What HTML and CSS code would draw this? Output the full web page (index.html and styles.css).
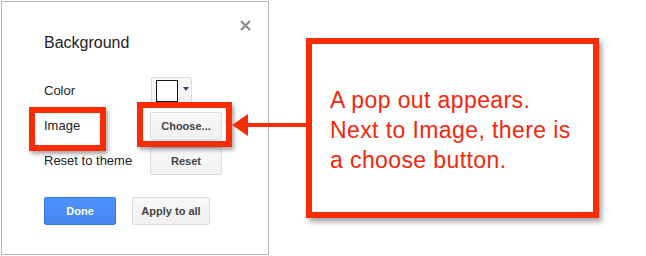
FILE: index.html
```html
<!DOCTYPE html>
<html lang="en">
<head>
    <meta charset="UTF-8">
    <title>Background dialog - annotated</title>
    <link rel="stylesheet" href="styles.css">
</head>
<body>
    <div class="stage">
        <div class="dialog">
            <svg class="close" width="11" height="11" viewBox="0 0 11 11">
                <path d="M1 1 L10 10 M10 1 L1 10" stroke="#8c8c8c" stroke-width="2.2" fill="none"/>
            </svg>
            <h2 class="title">Background</h2>
            <div class="rows">
                <span class="label">Color</span>
                <button class="btn color-btn">
                    <span class="swatch"></span>
                    <span class="caret"></span>
                </button>

                <span class="label">Image</span>
                <button class="btn">Choose...</button>

                <span class="label">Reset to theme</span>
                <button class="btn">Reset</button>
            </div>
            <div class="actions">
                <button class="btn btn-primary">Done</button>
                <button class="btn btn-wide">Apply to all</button>
            </div>
        </div>

        <!-- annotations drawn over the screenshot -->
        <div class="mark mark-image"></div>
        <div class="mark mark-choose"></div>
        <svg class="arrow" width="80" height="30" viewBox="0 0 80 30">
            <rect x="14" y="13" width="64" height="4" fill="#fa2c06"/>
            <polygon points="2,15 18,4 18,26" fill="#fa2c06"/>
        </svg>
        <div class="callout">
            A pop out appears.<br>
            Next to Image, there is<br>
            a choose button.
        </div>
    </div>
</body>
</html>
```

FILE: styles.css
```css
body {
    margin: 0;
    background: #fff;
    font-family: "Liberation Sans", Arial, sans-serif;
}
.stage {
    position: relative;
    width: 646px;
    height: 256px;
    overflow: hidden;
}
.dialog {
    position: relative;
    box-sizing: border-box;
    width: 268px;
    height: 254px;
    margin: 1px 0 0 1px;
    padding: 31px 0 0 42px;
    border: 1px solid #b4b4b4;
    background: #fff;
}
.close {
    position: absolute;
    top: 18px;
    left: 238px;
}
.title {
    margin: 0;
    font-size: 16px;
    font-weight: normal;
    line-height: 20px;
    color: #222;
}
.rows {
    display: grid;
    grid-template-columns: 106px auto;
    grid-auto-rows: 28px;
    row-gap: 7px;
    align-items: center;
    justify-items: start;
    margin-top: 24px;
}
.label {
    font-size: 13px;
    color: #222;
    margin-bottom: 2px;
}
.btn {
    box-sizing: border-box;
    width: 72px;
    height: 28px;
    padding: 0;
    border: 1px solid #dcdcdc;
    border-radius: 2px;
    background: linear-gradient(#f8f8f8, #f1f1f1);
    font-family: "Liberation Sans", Arial, sans-serif;
    font-size: 11px;
    font-weight: bold;
    color: #444;
}
.color-btn {
    display: flex;
    align-items: center;
    gap: 5px;
    width: 41px;
    padding-left: 4px;
    margin-left: 1px;
}
.swatch {
    box-sizing: border-box;
    width: 22px;
    height: 22px;
    border: 1px solid #111;
    background: #fff;
}
.caret {
    width: 0;
    height: 0;
    margin-bottom: 5px;
    border-left: 3.5px solid transparent;
    border-right: 3.5px solid transparent;
    border-top: 4px solid #34457a;
}
.actions {
    display: flex;
    gap: 16px;
    margin-top: 22px;
}
.btn-primary {
    border-color: #3079ed;
    background: linear-gradient(#4d90fe, #4787ed);
    color: #fff;
}
.btn-wide {
    width: 78px;
}
.mark {
    position: absolute;
    box-sizing: border-box;
    border: 6px solid #fa2c06;
    box-shadow: 2px 3px 4px rgba(0, 0, 0, 0.35);
}
.mark-image {
    left: 29px;
    top: 107px;
    width: 77px;
    height: 44px;
}
.mark-choose {
    left: 137px;
    top: 102px;
    width: 95px;
    height: 45px;
}
.arrow {
    position: absolute;
    left: 230px;
    top: 110px;
}
.callout {
    position: absolute;
    box-sizing: border-box;
    left: 306px;
    top: 38px;
    width: 293px;
    height: 180px;
    padding: 41px 0 0 18px;
    border: 6px solid #fa2c06;
    box-shadow: 3px 4px 5px rgba(0, 0, 0, 0.35);
    background: #fff;
    font-size: 23px;
    letter-spacing: 0.4px;
    line-height: 30px;
    color: #f5260a;
}
```
